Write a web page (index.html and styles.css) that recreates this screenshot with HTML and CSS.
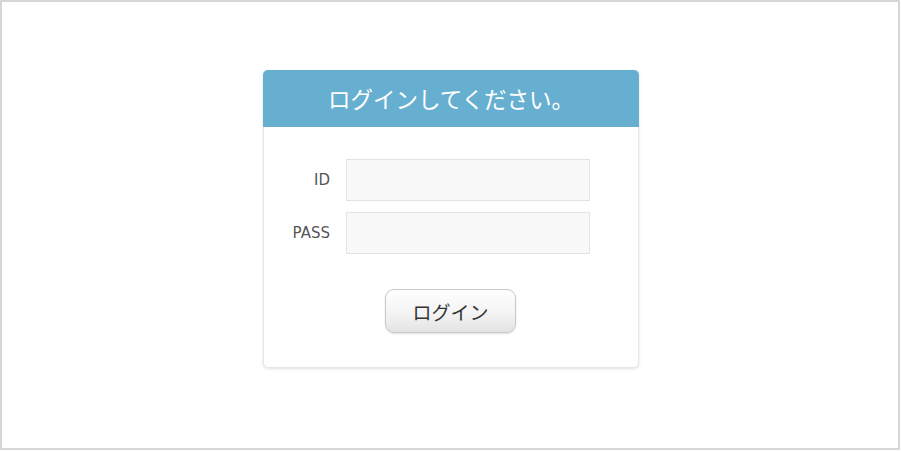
FILE: index.html
```html
<!DOCTYPE html>
<html lang="ja">
<head>
<meta charset="utf-8">
<link rel="stylesheet" href="styles.css">
</head>
<body>
<div class="frame">
  <div class="card">
    <div class="card-header">ログインしてください。</div>
    <form class="card-body">
      <div class="row">
        <label class="label" for="id">ID</label>
        <input class="field" id="id" type="text">
      </div>
      <div class="row">
        <label class="label" for="pass">PASS</label>
        <input class="field" id="pass" type="password">
      </div>
      <div class="actions">
        <button class="btn" type="button">ログイン</button>
      </div>
    </form>
  </div>
</div>
</body>
</html>
```
FILE: styles.css
```css
html, body {
  margin: 0;
  padding: 0;
  background: #ffffff;
}
.frame {
  box-sizing: border-box;
  width: 900px;
  height: 450px;
  border: 2px solid #d6d6d6;
  display: flex;
  justify-content: center;
  padding-top: 68px;
}
.card {
  box-sizing: border-box;
  width: 376px;
  height: 298px;
  border: 1px solid #e6e6e6;
  border-radius: 5px;
  box-shadow: 0 1px 3px rgba(0,0,0,0.12);
  background: #fff;
  display: flex;
  flex-direction: column;
  margin-left: 2px;
}
.card-header {
  height: 57px;
  margin: -1px -1px 0 -1px;
  background: #67afd1;
  border-radius: 5px 5px 0 0;
  color: #ffffff;
  font-family: "Noto Sans CJK JP", sans-serif;
  font-size: 22.5px;
  line-height: 57px;
  text-align: center;
}
.card-body {
  margin: 0;
  padding-top: 32px;
  display: flex;
  flex-direction: column;
  gap: 11px;
}
.row {
  display: grid;
  grid-template-columns: 82px 244px;
  align-items: center;
}
.label {
  text-align: right;
  padding-right: 16px;
  font-family: "DejaVu Sans", sans-serif;
  font-size: 15px;
  color: #555555;
}
.field {
  box-sizing: border-box;
  width: 244px;
  height: 42px;
  margin: 0;
  border: 1px solid #e3e3e3;
  background: #f8f8f8;
  border-radius: 0;
  outline: none;
}
.actions {
  display: flex;
  justify-content: center;
  padding-top: 24px;
}
.btn {
  box-sizing: border-box;
  width: 131px;
  height: 44px;
  border: 1px solid #c9c9c9;
  border-radius: 9px;
  background: linear-gradient(#ffffff, #f3f3f3 55%, #e4e4e4);
  box-shadow: 0 1px 2px rgba(0,0,0,0.12);
  color: #333333;
  font-family: "Noto Sans CJK JP", sans-serif;
  font-size: 19px;
  padding: 0;
  margin-left: -1px;
}
```
